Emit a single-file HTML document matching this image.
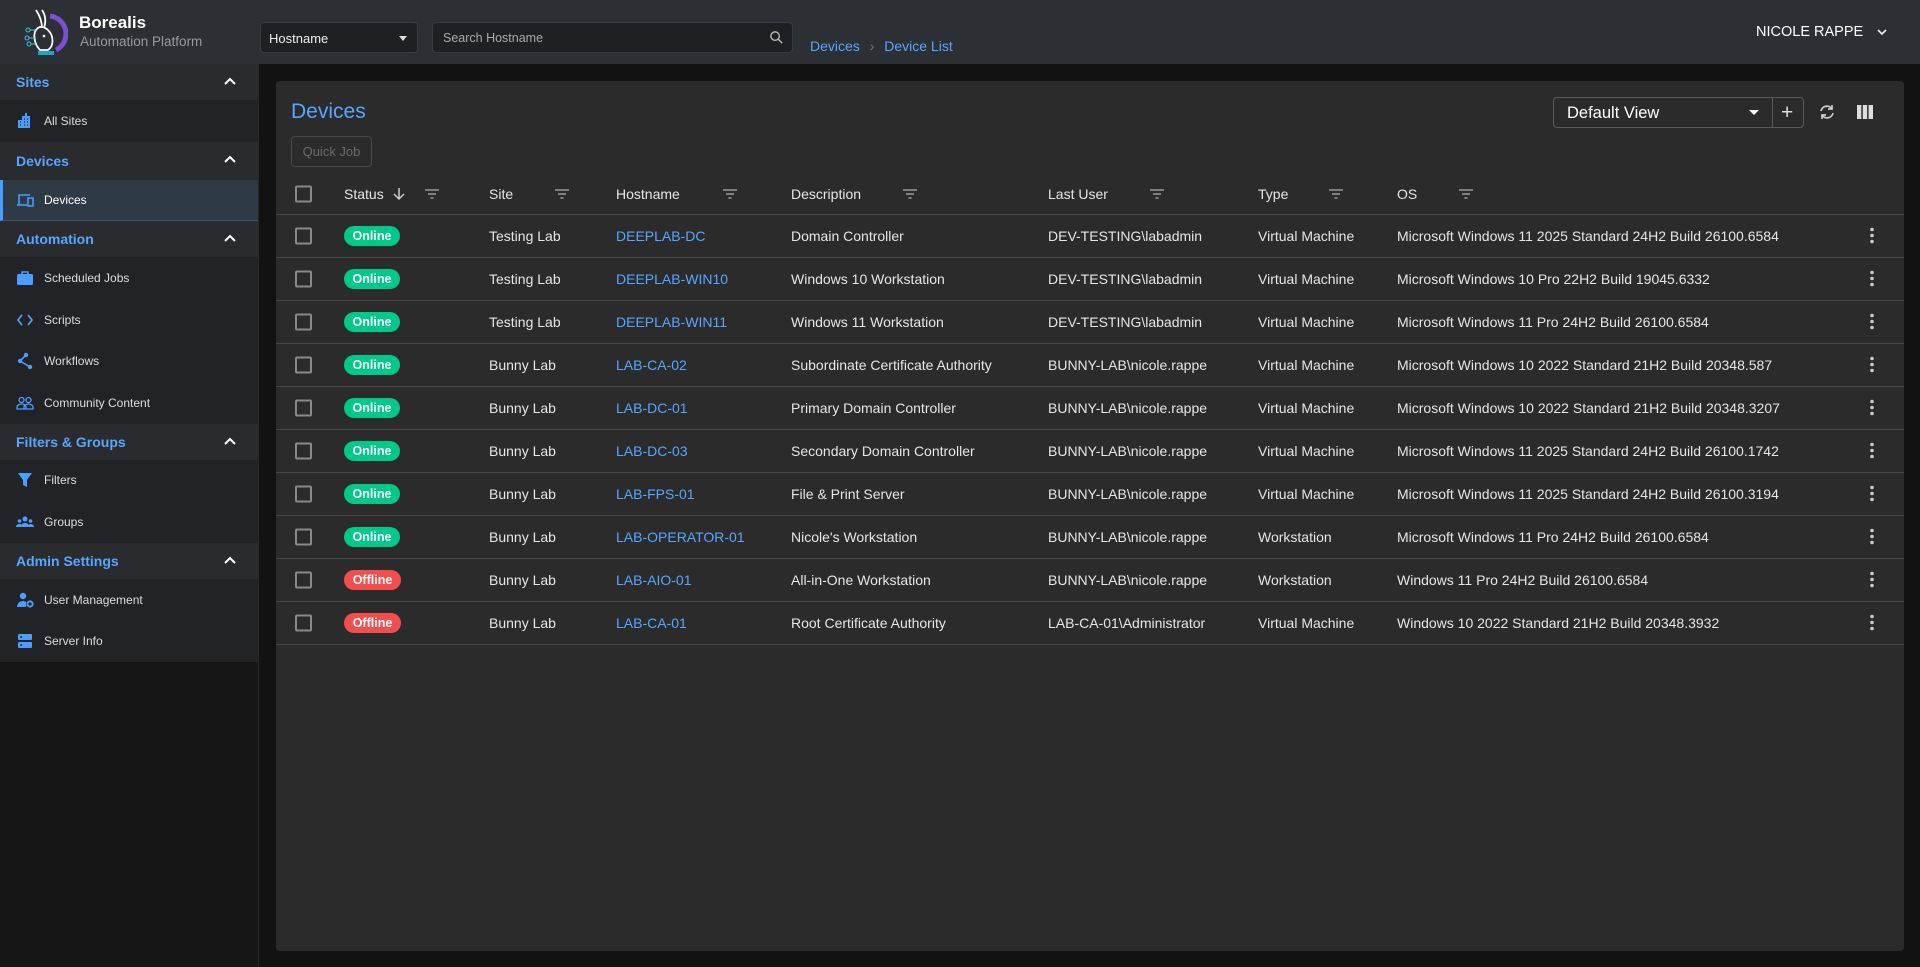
<!DOCTYPE html>
<html><head><meta charset="utf-8"><style>
*{box-sizing:border-box;margin:0;padding:0}
body{width:1920px;height:967px;background:#121212;font-family:"Liberation Sans",Arial,sans-serif;color:#e6e6e6;position:relative;overflow:hidden}
.hdr{position:absolute;left:0;top:0;width:1920px;height:64px;background:#2c2f34}
.sb{position:absolute;left:0;top:64px;width:259px;height:903px;background:#161616;border-right:1px solid #2a2a2a}
.sec{height:36px;background:#2a2b2e;color:#58a6ff;font-weight:bold;font-size:14px;padding-left:16px;display:flex;align-items:center;position:relative}
.sec svg{position:absolute;right:22px;top:12px}
.it{height:41.6px;background:#222326;font-size:12px;color:#ddd;display:flex;align-items:center;padding-left:16px}
.it svg{width:18px;height:18px;margin-right:10px}
.sel{background:#2f3a47;border-left:3px solid #4a9eff;border-bottom:1px solid #3d5570;padding-left:13px;color:#fff}
.card{position:absolute;left:276px;top:81px;width:1628px;height:870px;background:#2b2b2b;border-radius:4px}
.row{position:absolute;left:0;width:1628px;height:43px;border-bottom:1px solid #474747;font-size:14px}
.row span{position:absolute;top:50%;transform:translateY(-50%);white-space:nowrap}
.cb{width:17px;height:17px;border:2px solid #8a8a8a;border-radius:2px;left:19px}
.bd{color:#fff;font-weight:bold;font-size:12.5px;padding:3px 0;width:56px;text-align:center;border-radius:11px;left:68px}
.on{background:#00c98a}.off{background:#f24e4e;width:57px}
.lnk{color:#58a6ff}
.flt{width:14px}
</style></head><body>
<div class="hdr">
<svg style="position:absolute;left:22px;top:6px" width="46" height="52" viewBox="0 0 46 52"><path d="M14 4 C18 10 20 16 20 22 M20 4 C24 10 24 16 22 22 M16 22 C10 26 12 38 18 44 L26 44 C32 40 32 30 26 24 C23 21 18 20 16 22" fill="none" stroke="#fff" stroke-width="1.8"/><circle cx="22" cy="30" r="1.3" fill="#fff"/><path d="M28 10 A18 18 0 0 1 34 44" fill="none" stroke="#7a4fd0" stroke-width="5"/><path d="M16 47 L32 47" stroke="#1aa7c9" stroke-width="4"/><circle cx="6" cy="24" r="2" fill="none" stroke="#3ec4e0"/><circle cx="5" cy="32" r="2" fill="none" stroke="#3ec4e0"/><circle cx="7" cy="38" r="2" fill="none" stroke="#3ec4e0"/><path d="M8 24h6M7 32h7M9 38h5" stroke="#3ec4e0"/></svg>
<div style="position:absolute;left:79px;top:13px;font-size:17px;font-weight:bold;color:#fff">Borealis</div>
<div style="position:absolute;left:80px;top:34px;font-size:13.5px;color:#9a9a9a">Automation Platform</div>
<div style="position:absolute;left:260px;top:22px;width:158px;height:31px;background:#1f2023;border:1px solid #3a3b3f;border-radius:4px;font-size:13px;color:#eee;padding:8px 8px">Hostname<span style="position:absolute;right:10px;top:13px;border:4px solid transparent;border-top:5px solid #ddd"></span></div>
<div style="position:absolute;left:432px;top:22px;width:361px;height:31px;background:#1f2023;border:1px solid #3a3b3f;border-radius:4px;font-size:12.5px;color:#aaa;padding:8px 10px">Search Hostname<svg style="position:absolute;right:8px;top:7px" width="15" height="15" viewBox="0 0 16 16"><circle cx="6.5" cy="6.5" r="4.5" fill="none" stroke="#bbb" stroke-width="1.5"/><path d="M10 10l4 4" stroke="#bbb" stroke-width="1.5"/></svg></div>
<div style="position:absolute;left:810px;top:38px;font-size:14px;color:#58a6ff">Devices <span style="color:#777;margin:0 6px">›</span> Device List</div>
<div style="position:absolute;left:1756px;top:24px;font-size:14.5px;color:#fff">NICOLE RAPPE</div>
<svg style="position:absolute;left:1876px;top:27px" width="12" height="10" viewBox="0 0 12 10"><path d="M2 3l4 4 4-4" fill="none" stroke="#eee" stroke-width="1.6"/></svg>
</div>

<div class="sb">
<div class="sec">Sites<svg width="12" height="10"><path d="M1 8l5-5 5 5" fill="none" stroke="#fff" stroke-width="2"/></svg></div>
<div class="it"><svg viewBox="0 0 18 18"><path d="M2 16V8h4V4h3V1h2v3h3v12z" fill="#4a9eff"/><path d="M4 10h1M4 13h1M8 7h1M11 7h1M8 10h1M11 10h1M8 13h1M11 13h1" stroke="#222" stroke-width="1.2"/></svg>All Sites</div>
<div class="sec" style="height:38px">Devices<svg width="12" height="10"><path d="M1 8l5-5 5 5" fill="none" stroke="#fff" stroke-width="2"/></svg></div>
<div class="it sel"><svg viewBox="0 0 18 18"><path d="M3 13V4h11" fill="none" stroke="#4a9eff" stroke-width="1.6"/><path d="M1 14h10" stroke="#4a9eff" stroke-width="1.6"/><rect x="12" y="7" width="5" height="8" fill="none" stroke="#4a9eff" stroke-width="1.5"/></svg>Devices</div>
<div class="sec">Automation<svg width="12" height="10"><path d="M1 8l5-5 5 5" fill="none" stroke="#fff" stroke-width="2"/></svg></div>
<div class="it"><svg viewBox="0 0 18 18"><rect x="1" y="5" width="16" height="11" rx="1.5" fill="#4a9eff"/><path d="M6 5V3h6v2" fill="none" stroke="#4a9eff" stroke-width="1.6"/></svg>Scheduled Jobs</div>
<div class="it"><svg viewBox="0 0 18 18"><path d="M6 4L2 9l4 5M12 4l4 5-4 5" fill="none" stroke="#4a9eff" stroke-width="1.8"/></svg>Scripts</div>
<div class="it"><svg viewBox="0 0 18 18"><circle cx="10" cy="3" r="2.2" fill="#4a9eff"/><circle cx="4" cy="9" r="2.2" fill="#4a9eff"/><circle cx="14" cy="15" r="2.2" fill="#4a9eff"/><path d="M10 3L4 9l10 6" fill="none" stroke="#4a9eff" stroke-width="1.6"/></svg>Workflows</div>
<div class="it"><svg viewBox="0 0 18 18"><circle cx="5.5" cy="6" r="2.5" fill="none" stroke="#4a9eff" stroke-width="1.3"/><circle cx="12.5" cy="6" r="2.5" fill="none" stroke="#4a9eff" stroke-width="1.3"/><path d="M1 15v-2c0-2 3-3 4.5-3s4.5 1 4.5 3v2zM8 15v-2c0-2 3-3 4.5-3S17 11 17 13v2z" fill="none" stroke="#4a9eff" stroke-width="1.3"/></svg>Community Content</div>
<div class="sec">Filters &amp; Groups<svg width="12" height="10"><path d="M1 8l5-5 5 5" fill="none" stroke="#fff" stroke-width="2"/></svg></div>
<div class="it"><svg viewBox="0 0 18 18"><path d="M2 2h14l-5 7v7l-4-2V9z" fill="#4a9eff"/></svg>Filters</div>
<div class="it"><svg viewBox="0 0 18 18"><circle cx="9" cy="6" r="2.5" fill="#4a9eff"/><circle cx="3.5" cy="8" r="1.8" fill="#4a9eff"/><circle cx="14.5" cy="8" r="1.8" fill="#4a9eff"/><path d="M5 14c0-3 2-4 4-4s4 1 4 4zM0 14c0-2 1.5-3 3.5-3S6 12 6 14zM12 14c0-2 1-3 2.5-3s3.5 1 3.5 3z" fill="#4a9eff"/></svg>Groups</div>
<div class="sec">Admin Settings<svg width="12" height="10"><path d="M1 8l5-5 5 5" fill="none" stroke="#fff" stroke-width="2"/></svg></div>
<div class="it"><svg viewBox="0 0 18 18"><circle cx="7" cy="5" r="3.2" fill="#4a9eff"/><path d="M1 16c0-4 3-6 6-6 1 0 2 .3 3 .8V16z" fill="#4a9eff"/><circle cx="14" cy="13" r="2.6" fill="none" stroke="#4a9eff" stroke-width="2"/></svg>User Management</div>
<div class="it"><svg viewBox="0 0 18 18"><rect x="2" y="2" width="14" height="6" rx="1" fill="#4a9eff"/><rect x="2" y="10" width="14" height="6" rx="1" fill="#4a9eff"/><path d="M4 5h2M4 13h2" stroke="#222" stroke-width="1.5"/></svg>Server Info</div>
</div>

<div class="card">
<div style="position:absolute;left:15px;top:19px;font-size:21px;color:#58a6ff">Devices</div>
<div style="position:absolute;left:15px;top:55px;width:81px;height:31px;border:1px solid #474747;border-radius:4px;color:#6b6b6b;font-size:13px;text-align:center;line-height:29px">Quick Job</div>
<div style="position:absolute;left:1277px;top:16px;width:251px;height:31px;border:1px solid #5a5a5a;border-radius:4px;font-size:16.5px;color:#fff;padding:6px 13px">Default View<span style="position:absolute;left:195px;top:12px;border:5px solid transparent;border-top:5px solid #fff"></span><span style="position:absolute;left:218px;top:0;height:29px;border-left:1px solid #5a5a5a"></span><span style="position:absolute;left:227px;top:4px;font-size:21px;line-height:21px;color:#ddd">+</span></div>
<svg style="position:absolute;left:1542px;top:22px" width="18" height="18" viewBox="0 0 18 18"><path d="M3 8a6 6 0 0 1 11-2M15 10a6 6 0 0 1-11 2" fill="none" stroke="#ccc" stroke-width="1.7"/><path d="M14 2v4h-4M4 16v-4h4" fill="none" stroke="#ccc" stroke-width="1.7"/></svg>
<svg style="position:absolute;left:1581px;top:24px" width="16" height="14"><rect x="0" y="0" width="4.3" height="14" fill="#ddd"/><rect x="5.8" y="0" width="4.3" height="14" fill="#ddd"/><rect x="11.6" y="0" width="4.4" height="14" fill="#ddd"/></svg>

<div class="row" style="top:92px;height:42px">
<span class="cb"></span>
<span style="left:68px">Status <svg width="14" height="14" style="vertical-align:-2px;margin-left:4px"><path d="M7 1v11M2 7l5 5 5-5" fill="none" stroke="#ccc" stroke-width="1.5"/></svg></span>
<span style="left:213px">Site</span><span style="left:340px">Hostname</span><span style="left:515px">Description</span><span style="left:772px">Last User</span><span style="left:982px">Type</span><span style="left:1121px">OS</span>
<span class="flt" style="left:149px"><svg width="14" height="10"><path d="M0 1h14M3 5h8M5.5 9h3" stroke="#999" stroke-width="1.5"/></svg></span>
<span class="flt" style="left:279px"><svg width="14" height="10"><path d="M0 1h14M3 5h8M5.5 9h3" stroke="#999" stroke-width="1.5"/></svg></span>
<span class="flt" style="left:447px"><svg width="14" height="10"><path d="M0 1h14M3 5h8M5.5 9h3" stroke="#999" stroke-width="1.5"/></svg></span>
<span class="flt" style="left:627px"><svg width="14" height="10"><path d="M0 1h14M3 5h8M5.5 9h3" stroke="#999" stroke-width="1.5"/></svg></span>
<span class="flt" style="left:874px"><svg width="14" height="10"><path d="M0 1h14M3 5h8M5.5 9h3" stroke="#999" stroke-width="1.5"/></svg></span>
<span class="flt" style="left:1053px"><svg width="14" height="10"><path d="M0 1h14M3 5h8M5.5 9h3" stroke="#999" stroke-width="1.5"/></svg></span>
<span class="flt" style="left:1183px"><svg width="14" height="10"><path d="M0 1h14M3 5h8M5.5 9h3" stroke="#999" stroke-width="1.5"/></svg></span>
</div>
<div id="rows"></div>
</div>
<script>
var d=[["on","Testing Lab","DEEPLAB-DC","Domain Controller","DEV-TESTING\\labadmin","Virtual Machine","Microsoft Windows 11 2025 Standard 24H2 Build 26100.6584"],
["on","Testing Lab","DEEPLAB-WIN10","Windows 10 Workstation","DEV-TESTING\\labadmin","Virtual Machine","Microsoft Windows 10 Pro 22H2 Build 19045.6332"],
["on","Testing Lab","DEEPLAB-WIN11","Windows 11 Workstation","DEV-TESTING\\labadmin","Virtual Machine","Microsoft Windows 11 Pro 24H2 Build 26100.6584"],
["on","Bunny Lab","LAB-CA-02","Subordinate Certificate Authority","BUNNY-LAB\\nicole.rappe","Virtual Machine","Microsoft Windows 10 2022 Standard 21H2 Build 20348.587"],
["on","Bunny Lab","LAB-DC-01","Primary Domain Controller","BUNNY-LAB\\nicole.rappe","Virtual Machine","Microsoft Windows 10 2022 Standard 21H2 Build 20348.3207"],
["on","Bunny Lab","LAB-DC-03","Secondary Domain Controller","BUNNY-LAB\\nicole.rappe","Virtual Machine","Microsoft Windows 11 2025 Standard 24H2 Build 26100.1742"],
["on","Bunny Lab","LAB-FPS-01","File &amp; Print Server","BUNNY-LAB\\nicole.rappe","Virtual Machine","Microsoft Windows 11 2025 Standard 24H2 Build 26100.3194"],
["on","Bunny Lab","LAB-OPERATOR-01","Nicole's Workstation","BUNNY-LAB\\nicole.rappe","Workstation","Microsoft Windows 11 Pro 24H2 Build 26100.6584"],
["off","Bunny Lab","LAB-AIO-01","All-in-One Workstation","BUNNY-LAB\\nicole.rappe","Workstation","Windows 11 Pro 24H2 Build 26100.6584"],
["off","Bunny Lab","LAB-CA-01","Root Certificate Authority","LAB-CA-01\\Administrator","Virtual Machine","Windows 10 2022 Standard 21H2 Build 20348.3932"]];
var h="";d.forEach(function(r,i){h+='<div class="row" style="top:'+(134+i*43)+'px"><span class="cb"></span><span class="bd '+r[0]+'">'+(r[0]=="on"?"Online":"Offline")+'</span><span style="left:213px">'+r[1]+'</span><span class="lnk" style="left:340px">'+r[2]+'</span><span style="left:515px">'+r[3]+'</span><span style="left:772px">'+r[4]+'</span><span style="left:982px">'+r[5]+'</span><span style="left:1121px">'+r[6]+'</span><span style="left:1594px;margin-top:1px"><svg width="4" height="16"><circle cx="2" cy="2" r="1.8" fill="#ccc"/><circle cx="2" cy="8" r="1.8" fill="#ccc"/><circle cx="2" cy="14" r="1.8" fill="#ccc"/></svg></span></div>'});
document.getElementById("rows").innerHTML=h;
</script>
</body></html>
